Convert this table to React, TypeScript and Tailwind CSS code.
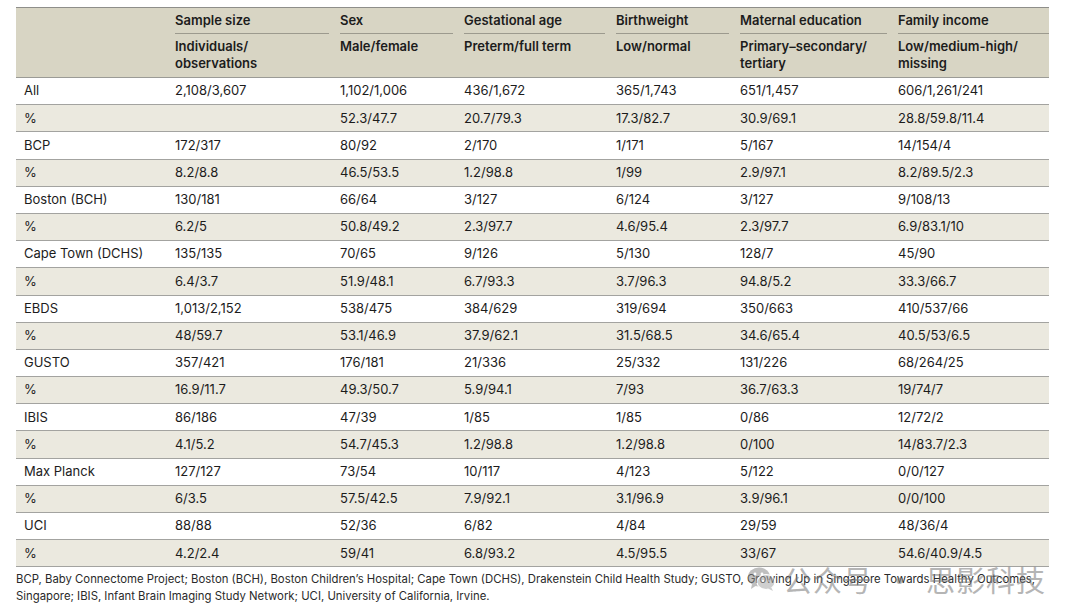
const cols = 'grid w-[1033px] grid-cols-[159px_165px_124px_152px_124px_158px_151px]';

const heads = [
  ['Sample size', 'Individuals/ observations'],
  ['Sex', 'Male/female'],
  ['Gestational age', 'Preterm/full term'],
  ['Birthweight', 'Low/normal'],
  ['Maternal education', 'Primary–secondary/ tertiary'],
  ['Family income', 'Low/medium-high/ missing'],
];

const rows: string[][] = [
  ['All', '2,108/3,607', '1,102/1,006', '436/1,672', '365/1,743', '651/1,457', '606/1,261/241'],
  ['%', '', '52.3/47.7', '20.7/79.3', '17.3/82.7', '30.9/69.1', '28.8/59.8/11.4'],
  ['BCP', '172/317', '80/92', '2/170', '1/171', '5/167', '14/154/4'],
  ['%', '8.2/8.8', '46.5/53.5', '1.2/98.8', '1/99', '2.9/97.1', '8.2/89.5/2.3'],
  ['Boston (BCH)', '130/181', '66/64', '3/127', '6/124', '3/127', '9/108/13'],
  ['%', '6.2/5', '50.8/49.2', '2.3/97.7', '4.6/95.4', '2.3/97.7', '6.9/83.1/10'],
  ['Cape Town (DCHS)', '135/135', '70/65', '9/126', '5/130', '128/7', '45/90'],
  ['%', '6.4/3.7', '51.9/48.1', '6.7/93.3', '3.7/96.3', '94.8/5.2', '33.3/66.7'],
  ['EBDS', '1,013/2,152', '538/475', '384/629', '319/694', '350/663', '410/537/66'],
  ['%', '48/59.7', '53.1/46.9', '37.9/62.1', '31.5/68.5', '34.6/65.4', '40.5/53/6.5'],
  ['GUSTO', '357/421', '176/181', '21/336', '25/332', '131/226', '68/264/25'],
  ['%', '16.9/11.7', '49.3/50.7', '5.9/94.1', '7/93', '36.7/63.3', '19/74/7'],
  ['IBIS', '86/186', '47/39', '1/85', '1/85', '0/86', '12/72/2'],
  ['%', '4.1/5.2', '54.7/45.3', '1.2/98.8', '1.2/98.8', '0/100', '14/83.7/2.3'],
  ['Max Planck', '127/127', '73/54', '10/117', '4/123', '5/122', '0/0/127'],
  ['%', '6/3.5', '57.5/42.5', '7.9/92.1', '3.1/96.9', '3.9/96.1', '0/0/100'],
  ['UCI', '88/88', '52/36', '6/82', '4/84', '29/59', '48/36/4'],
  ['%', '4.2/2.4', '59/41', '6.8/93.2', '4.5/95.5', '33/67', '54.6/40.9/4.5'],
];

function WeChatIcon() {
  return (
    <svg width="30" height="28" viewBox="0 0 30 28">
      <ellipse cx="12" cy="12" rx="11" ry="9.5" fill="#8c8c8c" />
      <path d="M5 19 L4 24 L10 20 Z" fill="#8c8c8c" />
      <ellipse cx="19" cy="17" rx="9" ry="7.5" fill="#a8a8a8" stroke="#fff" strokeWidth="1.2" />
      <path d="M24 22 L26 26 L21 23.5 Z" fill="#a8a8a8" />
      <circle cx="8" cy="9" r="1.4" fill="#fff" />
      <circle cx="15" cy="9" r="1.4" fill="#fff" />
      <circle cx="16" cy="16" r="1.1" fill="#fff" />
      <circle cx="22" cy="16" r="1.1" fill="#fff" />
    </svg>
  );
}

export default function App() {
  return (
    <div className="relative w-[1080px] h-[615px] bg-white text-[#1c1c1c] font-['Inter','Liberation_Sans',sans-serif] overflow-hidden">
      <div className="pt-[7px] pl-[16px]">
        {/* header */}
        <div className={`${cols} bg-[#d8d5c4] border-t-[1.5px] border-[#8e8e8a] border-b-[1.5px] border-b-[#9b9b96] h-[71px]`}>
          <div />
          {heads.map(([top, sub], i) => (
            <div key={top} className="flex flex-col">
              <div className={`h-[26px] flex items-center border-b border-[#9c9a8e] text-[13px] font-semibold ${i === 5 ? '' : 'mr-[11px]'}`}>
                {top}
              </div>
              <div className="pt-[4px] text-[13px] leading-[17px] font-semibold pr-4">{sub}</div>
            </div>
          ))}
        </div>
        {/* body */}
        {rows.map((r, i) => (
          <div
            key={i}
            className={`${cols} h-[27.2px] items-center text-[13px] border-b-[1.5px] border-[#a3a3a0] ${i % 2 === 1 ? 'bg-[#ebe9df]' : 'bg-white'}`}
          >
            {r.map((c, j) => (
              <div key={j} className={j === 0 ? 'pl-[8px]' : ''}>{c}</div>
            ))}
          </div>
        ))}
      </div>
      <div className="pl-[16px] pt-[4px] text-[11.35px] leading-[17px] text-[#2a2a2a] whitespace-nowrap">
        <p>BCP, Baby Connectome Project; Boston (BCH), Boston Children’s Hospital; Cape Town (DCHS), Drakenstein Child Health Study; GUSTO, Growing Up in Singapore Towards Healthy Outcomes,</p>
        <p>Singapore; IBIS, Infant Brain Imaging Study Network; UCI, University of California, Irvine.</p>
      </div>
      {/* watermark */}
      <div className="absolute right-[34px] top-[561px] flex items-center gap-[6px] opacity-55 text-[#7a7a7a] text-[29px] leading-[36px] whitespace-nowrap font-['Noto_Sans_CJK_SC',sans-serif] pointer-events-none">
        <WeChatIcon />
        <span className="tracking-[1px]">公众号</span>
        <span className="mx-[6px]">·</span>
        <span className="tracking-[1px]">思影科技</span>
      </div>
    </div>
  );
}
